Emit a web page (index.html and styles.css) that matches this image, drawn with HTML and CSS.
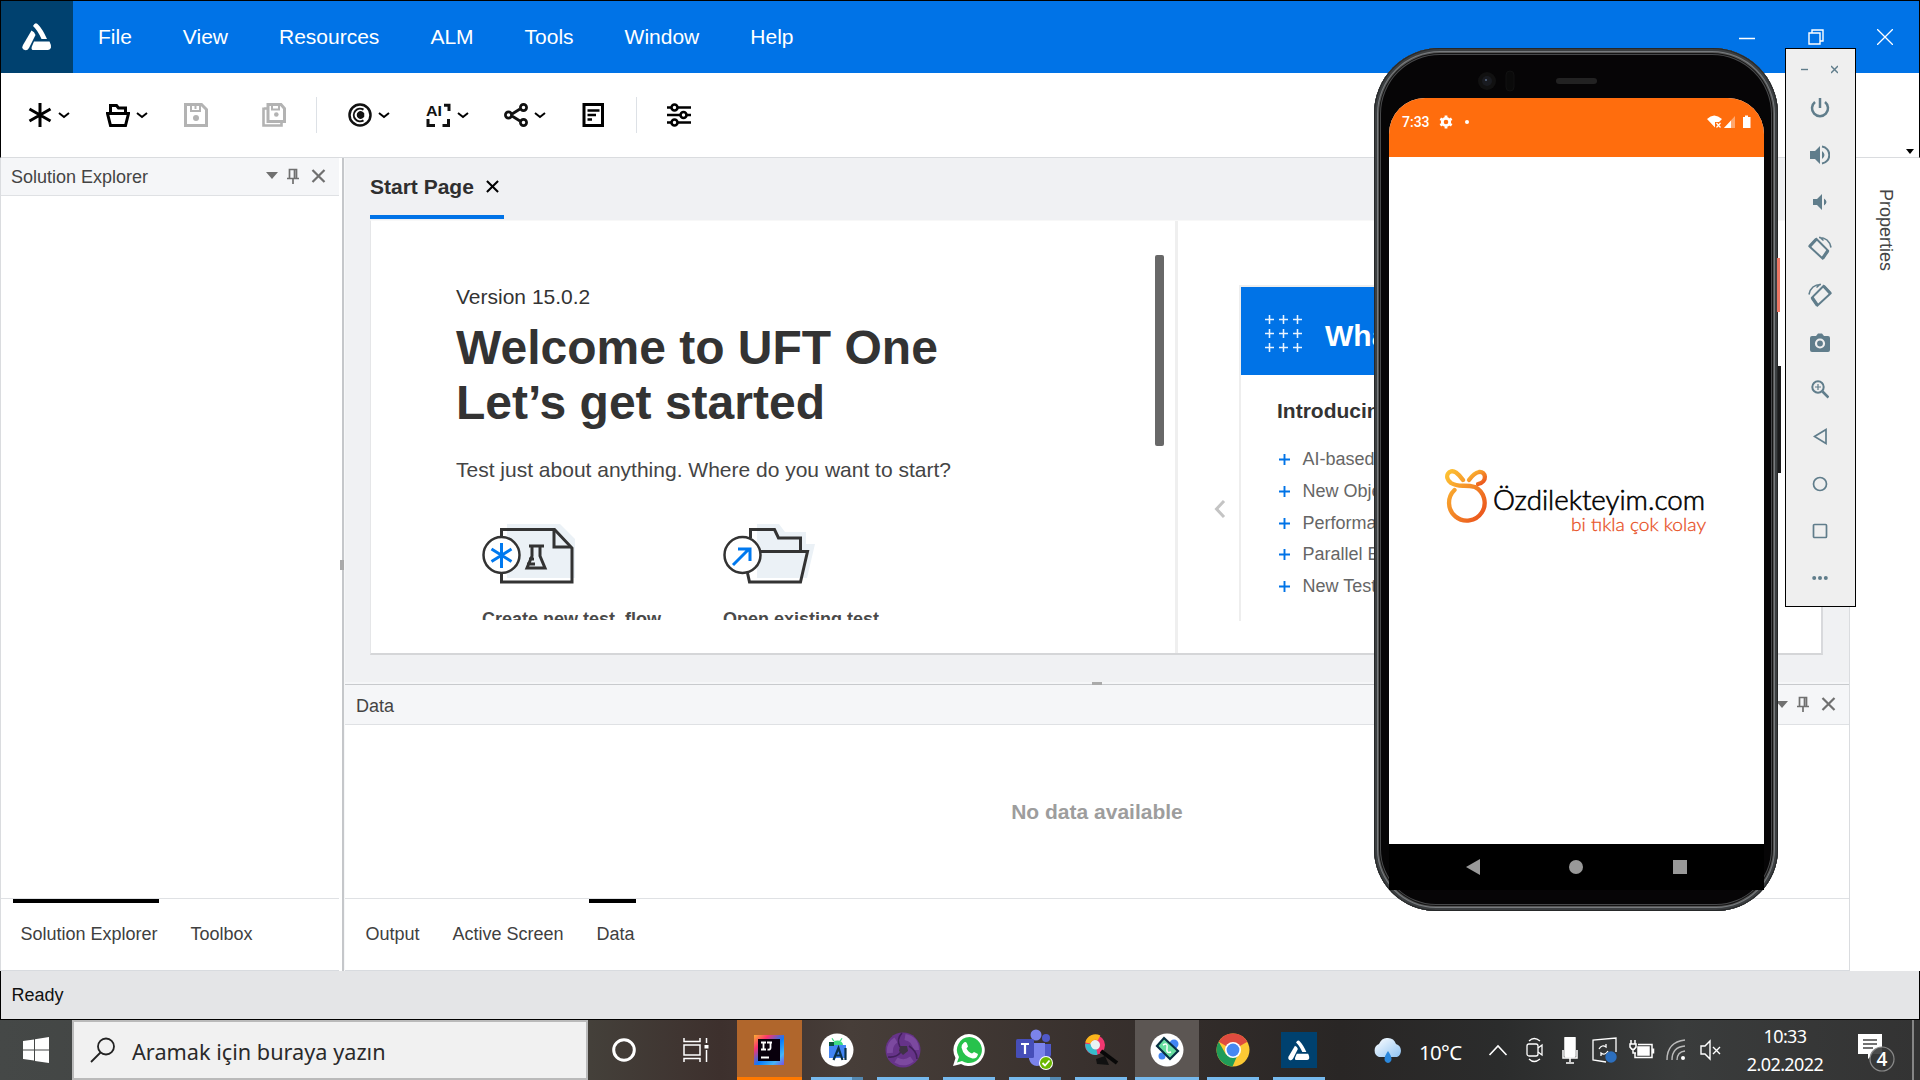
FILE: index.html
```html
<!DOCTYPE html>
<html lang="tr">
<head>
<meta charset="utf-8">
<title>UFT One</title>
<link rel="stylesheet" href="styles.css">
</head>
<body>
<svg class="defs" width="0" height="0" aria-hidden="true">
  <defs>
    <symbol id="uft" viewBox="0 0 30 28"><g fill="#fff"><path d="M11 3q2.500-5 5.500-1 4 4 8.500 14l-5.500 0q-4-9-8.500-13z"/><path d="M9.500 7.500q3 1 4 4.500L7 25q-2 3.500-5.500 1.500Q-.5 25 1 22z"/><path d="M12 18.500h15.500q2 4 1.500 6t-3 2.500H10.500q-2-1 0-5z"/></g></symbol>
    <symbol id="chev" viewBox="0 0 12 8"><path d="M1 2l5 4 5-4" fill="none" stroke="#000" stroke-width="2"/></symbol>
    <symbol id="pin" viewBox="0 0 12 16"><path d="M2.500 10V1.500h7V10M0 10.500h12M6 11v5M7.500 2v8" fill="none" stroke="#707070" stroke-width="1.700"/></symbol>
    <symbol id="close" viewBox="0 0 14 14"><path d="M1 1l12 12M13 1L1 13" fill="none" stroke="currentColor" stroke-width="2.200"/></symbol>
    <symbol id="plus" viewBox="0 0 11 11"><path d="M5.500 0v11M0 5.500h11" stroke="currentColor" stroke-width="1.900"/></symbol>
    <symbol id="rot" viewBox="0 0 24 24"><g fill="none" stroke="#607d8b"><path d="M8.500 2.500L20 14l-5.500 8L1.500 10z" stroke-width="2"/><path d="M8.500 2.500L1.500 10M20 14l-5.500 8" stroke-width="3.200"/><path d="M11 1q10 0 12 10M15.500 4l-4-3.500" stroke-width="1.600"/></g></symbol>
  </defs>
</svg>

<div class="app">
  <header class="titlebar">
    <div class="logo"><svg width="30" height="28"><use href="#uft"/></svg></div>
    <nav class="menu"><span>File</span><span>View</span><span>Resources</span><span>ALM</span><span>Tools</span><span>Window</span><span>Help</span></nav>
    <div class="winctl">
      <svg width="16" height="16"><path d="M0 9.500h16" stroke="#fff" stroke-width="1.500"/></svg>
      <svg width="16" height="16" fill="none" stroke="#fff" stroke-width="1.400"><path d="M1 4h11v11H1zM4 4V1h11v11h-3"/></svg>
      <svg width="16" height="16" stroke="#fff" stroke-width="1.300"><path d="M0 0l16 16M16 0L0 16"/></svg>
    </div>
  </header>

  <div class="toolbar">
    <div class="tool"><svg width="24" height="26" stroke="#000" stroke-width="3"><path d="M12 1v24M1.500 7l21 12M22.500 7l-21 12"/></svg><svg width="12" height="8"><use href="#chev"/></svg></div>
    <div class="tool"><svg width="24" height="24" fill="none" stroke="#000" stroke-width="3"><path d="M4.500 9V2.500h6l2 2.500h7v4M1.500 10.500h21l-3 12h-15z"/></svg><svg width="12" height="8"><use href="#chev"/></svg></div>
    <div class="tool"><svg width="24" height="24" fill="none" stroke="#b3b3b3" stroke-width="3"><path d="M1.500 1.500h16l5 5v16h-21z"/><path d="M7 2v6h9V2M11.500 3v3" stroke-width="2"/><circle cx="12" cy="15" r="3" fill="#b3b3b3" stroke="none"/></svg></div>
    <div class="tool"><svg width="24" height="24" fill="none" stroke="#b3b3b3" stroke-width="3"><path d="M6 1.500h13l3.500 4v13H6z"/><path d="M1.500 4.500v18h18v-4M2 5.500h3" stroke-width="2.600"/><path d="M10 2v4.500h7V2" stroke-width="2"/><circle cx="14.300" cy="11.500" r="2.300" fill="#b3b3b3" stroke="none"/></svg></div>
    <i class="sep"></i>
    <div class="tool"><svg width="24" height="24" fill="none" stroke="#111" stroke-width="2.500"><circle cx="12" cy="12" r="10.500"/><path d="M15.500 6.700A6.300 6.300 0 1 0 15.500 17.300" stroke-width="2"/><path d="M15.500 10.500a3.200 3.200 0 1 0 0 3z" fill="#111" stroke-width="1.500"/></svg><svg width="12" height="8"><use href="#chev"/></svg></div>
    <div class="tool"><svg width="25" height="24"><text x="0" y="13" class="ai" textLength="16" lengthAdjust="spacingAndGlyphs">AI</text><path d="M18 2.200h5V8M22.500 16v6.500h-6M9 22.500H2V16" fill="none" stroke="#111" stroke-width="3"/></svg><svg width="12" height="8"><use href="#chev"/></svg></div>
    <div class="tool"><svg width="24" height="24" fill="none" stroke="#111" stroke-width="2.700"><path d="M8 11l8-5M8 13l8 5"/><circle cx="4.500" cy="12" r="3.100"/><circle cx="19.500" cy="4.500" r="3.100"/><circle cx="19.500" cy="19.500" r="3.100"/></svg><svg width="12" height="8"><use href="#chev"/></svg></div>
    <div class="tool"><svg width="24" height="24" fill="none" stroke="#000" stroke-width="3"><path d="M2 1.500h18.500v21H2z"/><path d="M5.500 7.500h12M5.500 12H14M5.500 16.500H10" stroke-width="2.500"/></svg></div>
    <i class="sep sep-b"></i>
    <div class="tool"><svg width="24" height="24" fill="#fff" stroke="#000" stroke-width="2.600"><path d="M0 4.500h24M0 12h24M0 19.500h24"/><circle cx="7.500" cy="4.500" r="3"/><circle cx="16.500" cy="12" r="3"/><circle cx="7.500" cy="19.500" r="3"/></svg></div>
    <i class="overflow tri"></i>
  </div>

  <main class="work">
    <section class="explorer">
      <div class="phead"><span>Solution Explorer</span><i class="tri gray"></i><svg width="12" height="16"><use href="#pin"/></svg><svg class="x" width="15" height="14"><use href="#close"/></svg></div>
      <div class="pbody"></div>
      <div class="tabs"><span class="on">Solution Explorer</span><span>Toolbox</span></div>
    </section>
    <div class="vsplit"><i></i></div>
    <section class="center">
      <div class="doc">
        <div class="doctab"><span>Start Page</span><svg width="14" height="14"><use href="#close"/></svg></div>
        <div class="card">
          <div class="welcome">
            <div class="scroller">
              <p class="ver">Version 15.0.2</p>
              <h1>Welcome to UFT One<br>Let’s get started</h1>
              <p class="sub">Test just about anything. Where do you want to start?</p>
              <div class="starts">
                <div class="start"><svg width="94" height="60" fill="none" stroke="#333" stroke-width="3"><path d="M25 0h53l15 15v39H25z" fill="#ebf1f6" stroke="none"/><path d="M19.500 5.500h53L90 24v34H19.500z"/><path d="M72 6v17h17"/><circle cx="19.500" cy="31" r="18" fill="#fff" stroke-width="2.500"/><path d="M19.500 19v25M9.500 25l20 12.500M29.500 25l-20 12.500" stroke="#0079ef"/><path d="M47 22h15M50 23v9l-5 12h18l-5-12v-9M47 35h5M45 40h8"/></svg><b>Create new test, flow</b></div>
                <div class="start"><svg width="94" height="60" fill="none" stroke="#333" stroke-width="3"><path d="M34 0h22l6 8h21v12h9l-8 34H34z" fill="#ebf1f6" stroke="none"/><path d="M27.500 14V5.500h24l4 8.500h22v13M36 27.500h48.500l-7 30.500H26.500l-2-9"/><circle cx="19.500" cy="31" r="18" fill="#fff" stroke-width="2.500"/><path d="M10 41l16-16M15 25h12v12" stroke="#0079ef"/></svg><b>Open existing test</b></div>
              </div>
            </div>
            <i class="thumb"></i>
          </div>
          <div class="news">
            <svg class="prev" width="12" height="18" fill="none" stroke="#c4c4c4" stroke-width="3"><path d="M10 1L2.500 9l7.500 8"/></svg>
            <div class="newscard">
              <div class="newshead"><div class="grid"><svg><use href="#plus"/></svg><svg><use href="#plus"/></svg><svg><use href="#plus"/></svg><svg><use href="#plus"/></svg><svg><use href="#plus"/></svg><svg><use href="#plus"/></svg><svg><use href="#plus"/></svg><svg><use href="#plus"/></svg><svg><use href="#plus"/></svg></div>What’s New</div>
              <h2>Introducing</h2>
              <ul><li><svg><use href="#plus"/></svg>AI-based</li><li><svg><use href="#plus"/></svg>New Object</li><li><svg><use href="#plus"/></svg>Performance</li><li><svg><use href="#plus"/></svg>Parallel E</li><li><svg><use href="#plus"/></svg>New Test</li></ul>
            </div>
          </div>
        </div>
      </div>
      <div class="hsplit"><i></i></div>
      <div class="phead data"><span>Data</span><i class="tri gray"></i><svg width="12" height="16"><use href="#pin"/></svg><svg class="x" width="15" height="14"><use href="#close"/></svg></div>
      <div class="pbody nodata">No data available</div>
      <div class="tabs dtabs"><span>Output</span><span>Active Screen</span><span class="on">Data</span></div>
    </section>
    <aside class="props"><span>Properties</span></aside>
  </main>
  <footer class="status">Ready</footer>
</div>

<div class="taskbar">
  <div class="win"><svg width="26" height="26" fill="#fff"><path d="M0 4l11-1.500v10H0zM12 2.300L26 0v12.500H12zM0 13.500h11v10L0 22zM12 13.500h14V26l-14-2z"/></svg></div>
  <div class="search"><svg width="26" height="26" fill="none" stroke="#222" stroke-width="1.800"><circle cx="16" cy="9.500" r="8"/><path d="M10.500 15.500L1 25"/></svg><span>Aramak için buraya yazın</span></div>
  <div class="sys"><svg width="26" height="26"><circle cx="13" cy="13" r="10.300" fill="none" stroke="#fff" stroke-width="3"/></svg></div>
  <div class="sys"><svg width="26" height="26" fill="none" stroke="#fff" stroke-width="1.500"><path d="M1 1v3.500h16V1M1 8h16v10H1zM1 25v-3.500h16V25M23.500 1v5M23.500 13v12"/><path d="M21.500 8h4v3.500h-4z" fill="#fff" stroke="none"/></svg></div>
  <div class="apps">
    <div class="app-i ij"><svg width="32" height="32"><defs><linearGradient id="g1" x2="1" y2="1"><stop offset="0" stop-color="#fdb02f"/><stop offset=".25" stop-color="#fb3370"/><stop offset=".55" stop-color="#087cfa"/><stop offset=".8" stop-color="#46b5f5"/><stop offset="1" stop-color="#7b4ce0"/></linearGradient></defs><path d="M1 1h30v30H1z" fill="url(#g1)"/><path d="M5 5h22v22H5z" fill="#08000c"/><path d="M8 8.500h5M10.500 8.500v7M8 15.500h5M14 8.500h5M17.500 8v6q0 2-3 1.500M8 23.500h8" fill="none" stroke="#fff" stroke-width="1.800"/></svg></div>
    <div class="app-i twin"><svg width="34" height="34"><circle cx="17" cy="17" r="16.500" fill="#fff"/><path d="M12 12a5.500 4.500 0 0 1 11 0zM13 8l-1.500-2.500 1-.5 2 3zM21 8l1.500-2.500-1-.5-2 3z" fill="#3ddc84"/><path d="M9 12h17v13H9z" fill="#4285f4"/><path d="M9 9h5v4H9z" fill="#08563f"/><path d="M13.500 27l5-12 4 12M25.500 15v12M15 22.500h6" fill="none" stroke="#08304a" stroke-width="2.200"/></svg></div>
    <div class="app-i"><svg width="36" height="36" fill="none"><circle cx="18" cy="18" r="17.500" fill="#663389"/><path d="M20 5q11 2 11 13M27 27q-8 6-16 1M5 21q-1-9 6-13" stroke="#8a59ad" stroke-width="6" opacity=".6"/><path d="M17 1q-6 6-2 14M3 25q8 1 13-5M32 27q0-8-8-13" stroke="#42205b" stroke-width="1.600"/><path d="M15 14h7l1 5-5 4-4-4z" fill="#3e3244"/></svg></div>
    <div class="app-i"><svg width="34" height="34"><path d="M17 1A16 16 0 1 1 9 31L1 33l2.500-8A16 16 0 0 1 17 1z" fill="#fff"/><path d="M17.500 4A13 13 0 1 1 10 28l-5 1.500L7 24A13 13 0 0 1 17.500 4z" fill="#27c24c"/><path d="M11.500 10q2-2 3.500.5l1 3-1.500 2q2 4 5.500 5l2-1.500 4 2q-1 5-5.500 4.500-9-2-11-11-.2-3 2-4.500z" fill="#fff"/></svg></div>
    <div class="app-i twin"><svg width="38" height="42"><circle cx="20" cy="6" r="5.500" fill="#7b83eb"/><circle cx="30" cy="9" r="4" fill="#5059c9"/><path d="M24 15h11v11q-2 6-8 5z" fill="#5059c9"/><path d="M13 14h16v16q-2 7-8 7t-8-7z" fill="#7b83eb"/><rect x="0" y="10" width="18" height="19" rx="1.500" fill="#464eb8"/><path d="M5 15h8M9 15v10" stroke="#fff" stroke-width="2.200"/><circle cx="30" cy="34" r="7" fill="#fff"/><circle cx="30" cy="34" r="6" fill="#6bb700"/><path d="M26.500 34l2.500 2.500 4.500-5" fill="none" stroke="#fff" stroke-width="1.800"/></svg></div>
    <div class="app-i"><svg width="36" height="34" fill="none"><path d="M13 26l9-3 4 9-12-1z" fill="#111"/><circle cx="12" cy="12" r="7.500" fill="#e8f2f5" stroke="#f23770" stroke-width="5"/><path d="M5 10a7.500 7.500 0 0 1 11-5" stroke="#fbb51b" stroke-width="5.500"/><path d="M5 11a7.500 7.500 0 0 0 9 8" stroke="#35bccb" stroke-width="5.500"/><path d="M18 18l16 12" stroke="#080808" stroke-width="4"/></svg></div>
    <div class="app-i active"><svg width="34" height="34"><circle cx="17" cy="17" r="16.500" fill="#fff"/><circle cx="24" cy="11" r="4.500" fill="#4285f4"/><circle cx="12" cy="23" r="3.500" fill="#4285f4"/><path d="M14 5l14 13-8 8L7 13z" fill="#68dfa0" stroke="#073042" stroke-width="2.200"/><path d="M13 12q5-3 4 3t4 4" fill="none" stroke="#fff" stroke-width="1.500"/></svg></div>
    <div class="app-i"><svg width="34" height="34"><circle cx="17" cy="17" r="16.500" fill="#fcc934"/><path d="M17 17L2.700 8.800a16.500 16.500 0 0 1 28.600 0z" fill="#df4b3f"/><path d="M2.700 8.800l7.300 12.700 7 1.500 5-2-5.500 12.500A16.500 16.500 0 0 1 2.700 8.800z" fill="#209c58"/><circle cx="17" cy="17" r="8" fill="#fff"/><circle cx="17" cy="17" r="6.400" fill="#4688f1"/></svg></div>
    <div class="app-i"><div class="uftbox"><svg width="22" height="21"><use href="#uft"/></svg></div></div>
  </div>
  <div class="tray">
    <div class="weather"><svg width="32" height="28"><defs><linearGradient id="g2" x2="1" y2="1"><stop offset="0" stop-color="#fff"/><stop offset="1" stop-color="#8fc3f3"/></linearGradient></defs><path d="M7 21a7 7 0 0 1 0-13Q10 1 16 2q6 0 8 6a7 7 0 0 1 1 13z" fill="url(#g2)"/><path d="M16 15q7 10 0 12-7-2 0-12z" fill="#2b88dd"/></svg><span>10°C</span></div>
    <svg width="20" height="12" fill="none" stroke="#fff" stroke-width="1.600"><path d="M1.500 11L10 2l8.500 9"/></svg>
    <svg width="18" height="26" fill="none" stroke="#fff" stroke-width="1.300"><rect x="1" y="7" width="11" height="12" rx="2"/><path d="M12 11l4-3v10l-4-3M3 4q5-5 11 0M3 22q5 5 11 0"/></svg>
    <svg width="16" height="27" fill="none" stroke="#fff" stroke-width="1.500"><rect x="3" y="0" width="10" height="20" rx="1" fill="#fff"/><path d="M1 13v8h14v-8M8 21v4M4 26h8"/></svg>
    <svg width="26" height="26" fill="none" stroke="#fff" stroke-width="1.300"><path d="M14 25L1 23V3l23-2v14"/><path d="M7 12q3-5 7-2V7M16 14q-3 5-7 2v3"/><circle cx="19" cy="20" r="5.700" fill="#2c6fbe" stroke="none"/></svg>
    <svg width="26" height="22" fill="none" stroke="#fff" stroke-width="1.500"><path d="M9 5.500h14v13H6v-5M24.500 9.500v5M2 1v4M6 1v4M1 5h6v3q-3 5-6 0zM4 10v4h3"/><path d="M9 8h11v8H9z" fill="#fff"/></svg>
    <svg width="20" height="22" fill="none" stroke="#bbb" stroke-width="1.400"><path d="M1 21Q1 3 19 1M6 21q0-13 13-14M11 21q0-8 8-9"/><circle cx="17" cy="19" r="2" fill="#fff" stroke="none"/></svg>
    <svg width="22" height="22" fill="none" stroke="#fff" stroke-width="1.400"><path d="M1 7h4l5-5v18l-5-5H1zM13 8l7 7M20 8l-7 7"/></svg>
    <div class="clock"><span>10:33</span><span>2.02.2022</span></div>
    <div class="notif"><svg width="40" height="42"><path d="M1 1h24v20h-9l-5 5v-5H1z" fill="#fff"/><path d="M6 7h14M6 11h14M6 15h10" stroke="#444" stroke-width="1.400"/><circle cx="25" cy="26" r="12" fill="#373939" fill-opacity=".9" stroke="#8a8a8a" stroke-width="1.200"/><text x="25" y="32.500" text-anchor="middle" class="cnt">4</text></svg></div>
    <i class="peek"></i>
  </div>
</div>

<div class="phone">
  <i class="hw pw"></i><i class="hw vol"></i>
  <div class="bezel"><svg width="130" height="26"><circle cx="12" cy="13" r="9" fill="#111"/><circle cx="12" cy="13" r="5" fill="#191b20"/><circle cx="11" cy="12" r="1" fill="#5a6b86"/><rect x="31" y="3" width="8" height="20" rx="4" fill="#0a0a0a" stroke="#111"/><rect x="81" y="10" width="41" height="6" rx="3" fill="#222"/></svg></div>
  <div class="screen">
    <div class="astatus"><span>7:33</span>
      <svg width="14" height="14" fill="none" stroke="#fff"><circle cx="7" cy="7" r="3.700" stroke-width="2.800"/><path d="M7 .5v2M7 11.500v2M1.300 3.700l2 1.200M10.700 9.100l2 1.200M1.300 10.300l2-1.200M10.700 4.900l2-1.200" stroke-width="2.800"/></svg>
      <i class="dot"></i>
      <svg class="sig" width="44" height="14" fill="#fff"><path d="M0 4q7-7 15 0l-3 3H8v5.500z"/><path d="M9.500 8l4 4.500M13.500 8l-4 4.500" stroke="#fff" stroke-width="1.200"/><path d="M17 13L28 1v12z" opacity=".4"/><path d="M17 13l7-7.600V13z"/><path d="M36 2h2V.500h3V2h2.500v11H36z"/></svg>
    </div>
    <div class="splash">
      <svg width="270" height="72"><defs><linearGradient id="g3" x2="1" y2="1"><stop offset="0" stop-color="#fdc233"/><stop offset="1" stop-color="#ea4e1b"/></linearGradient></defs>
        <g fill="none" stroke="url(#g3)" stroke-width="4.300" stroke-linecap="round"><path d="M10.500 21A17.800 17.800 0 1 0 31 18C20 15 15 19 7 14-1 8 5-1 12 3.500q4 3 7 7.500"/><path d="M25 11q5-7 10-8c7-1 9 10-1 12"/></g>
        <text x="49" y="40.500" class="oz" textLength="212" lengthAdjust="spacingAndGlyphs">Özdilekteyim.com</text>
        <text x="127" y="61.500" class="tag" textLength="135" lengthAdjust="spacingAndGlyphs">bi tıkla çok kolay</text></svg>
    </div>
    <div class="anav"><svg width="14" height="16" fill="#999"><path d="M0 8L14 0v16z"/></svg><svg width="14" height="16"><circle cx="7" cy="8" r="7" fill="#999"/></svg><svg width="14" height="16"><path d="M0 1h14v14H0z" fill="#999"/></svg></div>
  </div>
</div>

<div class="emu">
  <div class="emuwin"><svg width="7" height="9"><path d="M0 4.500h7" stroke="#607d8b" stroke-width="1.400"/></svg><svg width="7" height="9" stroke="#607d8b" stroke-width="1.500"><path d="M0 1l7 7M7 1L0 8"/></svg></div>
  <div><svg width="20" height="22" fill="none" stroke="#607d8b" stroke-width="2.500"><path d="M10 1v10M5 5a8 8 0 1 0 10 0"/></svg></div>
  <div><svg width="20" height="20" fill="#607d8b"><path d="M0 6h5l5-5v18l-5-5H0zM12 6q5 4 0 8z"/><path d="M12 1.500a8.600 8.600 0 0 1 0 17" fill="none" stroke="#607d8b" stroke-width="2"/></svg></div>
  <div><svg width="16" height="18" fill="#607d8b"><path d="M1 6h4l5-5v16l-5-5H1zM12 5.500q5 3.500 0 7z"/></svg></div>
  <div><svg width="24" height="25"><use href="#rot"/></svg></div>
  <div><svg class="flip" width="24" height="25"><use href="#rot"/></svg></div>
  <div><svg width="20" height="20"><path d="M2 3h4l2-2.500h4L14 3h4q2 0 2 2v12q0 2-2 2H2q-2 0-2-2V5q0-2 2-2z" fill="#607d8b"/><circle cx="10" cy="10.500" r="4" fill="none" stroke="#efefef" stroke-width="2.200"/></svg></div>
  <div><svg width="18" height="19" fill="none" stroke="#607d8b" stroke-width="2"><circle cx="7" cy="7" r="5.700"/><path d="M11.500 11.500l6 6" stroke-width="2.600"/><path d="M7 4v6M4 7h6" stroke-width="1.200"/></svg></div>
  <div><svg width="14" height="17" fill="none" stroke="#607d8b" stroke-width="1.700"><path d="M1.500 8.500L13 1.500v14z"/></svg></div>
  <div><svg width="16" height="16" fill="none" stroke="#607d8b" stroke-width="1.700"><circle cx="8" cy="8" r="6.500"/></svg></div>
  <div><svg width="16" height="16" fill="none" stroke="#607d8b" stroke-width="1.700"><rect x="1.500" y="1.500" width="13" height="13" rx="1"/></svg></div>
  <div><svg width="16" height="6" fill="#607d8b"><circle cx="2.200" cy="3" r="2"/><circle cx="8" cy="3" r="2"/><circle cx="13.800" cy="3" r="2"/></svg></div>
</div>
</body>
</html>
```
FILE: styles.css
```css
* { box-sizing: border-box; }
body { margin: 0; width: 1920px; height: 1080px; overflow: hidden; position: relative; background: #fff; font: 18px "Liberation Sans", Arial, sans-serif; color: #444; }
svg { display: block; flex: none; }
.defs { position: absolute; }
h1, h2, p, ul { margin: 0; padding: 0; }
.app { height: 1020px; display: flex; flex-direction: column; }

.titlebar { height: 73px; border: 1px solid #000; border-bottom: 0; background: #0073e7; display: flex; align-items: center; }
.logo { width: 72px; height: 72px; background: #00416f; display: flex; align-items: center; justify-content: center; }
.menu { display: flex; gap: 51px; margin-left: 25px; color: #fff; font-size: 21px; }
.winctl { margin-left: auto; display: flex; gap: 53px; margin-right: 26px; }

.toolbar { height: 85px; border: 1px solid #000; border-top: 0; border-bottom: 1px solid #dadcdf; display: flex; align-items: center; padding-left: 27px; position: relative; }
.tool { width: 78px; height: 24px; display: flex; align-items: center; gap: 6px; }
.ai { font: bold 15.500px "Liberation Sans", Arial, sans-serif; fill: #111; }
.sep { width: 1px; height: 36px; background: #dde1e6; margin: 0 31px 0 -24px; }
.sep-b { margin: 0 30px 0 -24px; }
.tri { width: 0; height: 0; border: 4px solid transparent; border-top: 5px solid #000; border-bottom: 0; }
.overflow { position: absolute; right: 5px; bottom: 3px; }
.tri.gray { border-width: 7px 6.500px 0; border-top-color: #707070; }

.work { height: 813px; display: flex; }
.explorer { width: 339px; border-left: 1px solid #dadcdf; display: flex; flex-direction: column; }
.phead { height: 38px; background: #f5f6f8; border-bottom: 1px solid #dfe1e4; display: flex; align-items: center; padding: 0 13px 2px 10px; }
.phead span { flex: 1; padding-top: 3px; }
.phead svg { margin-left: 9px; color: #707070; }
.phead .x { margin-left: 12px; }
.pbody { flex: 1; }
.tabs { height: 73px; border-top: 1px solid #dfe1e4; border-bottom: 1px solid #d8dbdf; display: flex; padding-left: 12px; color: #404040; }
.tabs span { border-top: 4px solid transparent; padding: 21px 1px 0 7.500px; margin-right: 24.500px; }
.tabs .on { border-color: #000; }
.vsplit { width: 6px; background: linear-gradient(90deg, #fff 3px, #c5c7ca 3px, #c5c7ca 5px, #f6f7f8 5px); display: flex; align-items: center; }
.vsplit i { width: 4px; height: 10px; background: #aaa; margin-left: 1px; }
.center { width: 1504px; display: flex; flex-direction: column; }
.doc { height: 524px; background: #f0f1f3; padding-left: 25px; }
.doctab { width: 134px; height: 61px; border-bottom: 4px solid #0073e7; font-weight: bold; font-size: 21px; color: #2f2f2f; display: flex; align-items: center; gap: 12px; white-space: nowrap; }
.doctab svg { color: #000; width: 13px; height: 13px; }
.card { width: 1453px; height: 435px; margin-top: 1px; background: #fff; border: 1px solid #e5e6e8; border-top-color: #f8f8f8; border-right: 2px solid #d8d9dc; border-bottom: 2px solid #d5d6d8; display: flex; overflow: hidden; }
.welcome { width: 807px; border-right: 3px solid #efefef; display: flex; }
.scroller { height: 399px; width: 784px; padding: 63px 0 0 85px; overflow: hidden; }
.thumb { width: 9px; height: 191px; border-radius: 2px; margin-top: 34px; background: #686868; }
.ver { font-size: 21px; line-height: 26px; color: #333; }
h1 { font-size: 48px; line-height: 55px; color: #333; margin-top: 10px; }
.sub { font-size: 21px; line-height: 26px; margin-top: 27px; }
.starts { display: flex; gap: 61px; margin: 41px 0 0 26px; }
.start { width: 180px; white-space: nowrap; line-height: 24px; }
.start b { display: block; margin-top: 23px; color: #4a4a4a; }
.news { display: flex; }
.prev { margin: 279px 0 0 36px; }
.newscard { margin: 64px 0 0 13px; width: 400px; height: 336px; border: solid #eee; border-width: 2px 0 0 2px; }
.newshead { height: 88px; background: #0073e7; color: #fff; font: bold 30px "Liberation Sans", Arial, sans-serif; display: flex; align-items: center; padding: 9px 0 0 24px; gap: 23px; }
.grid { display: grid; grid-template-columns: repeat(3, 9px); gap: 5px; color: #e9f4ff; margin-top: -4px; }
.grid svg { width: 9px; height: 9px; }
h2 { font-size: 21px; line-height: 26px; margin: 23px 0 0 36px; color: #333; }
ul { list-style: none; margin: 20px 0 0 38px; color: #666; }
li { height: 31.700px; display: flex; align-items: center; gap: 12.500px; }
li svg { width: 11px; height: 11px; color: #0073e7; }
.hsplit { height: 3px; background: #f5f6f8; border-bottom: 1px solid #c8cacd; display: flex; justify-content: center; }
.hsplit i { width: 10px; height: 3px; background: #aaa; }
.data { height: 40px; padding: 0 13px 1px 11px; }
.data span { padding-top: 4px; }
.nodata { color: #9d9d9d; font-weight: bold; font-size: 21px; display: flex; align-items: center; justify-content: center; }
.dtabs { padding-left: 13px; }
.props { flex: 1; border-left: 1px solid #dadcdf; display: flex; justify-content: center; padding-top: 31px; }
.props span { writing-mode: vertical-rl; height: 84px; margin-left: 1px; }
.status { height: 49px; background: #e4e5e7; border: 1px solid #000; border-top: 0; color: #111; display: flex; align-items: center; padding-left: 10.500px; }

.taskbar { height: 60px; display: flex; background: linear-gradient(90deg, #454847 0, #404341 300px, #44403a 590px, #3d302d 720px, #473e39 850px, #38302d 1100px, #292625 1340px, #2b2c2c 1500px, #3a3c3c 1680px, #333 1920px); color: #fff; font-family: "Open Sans", "Noto Sans", sans-serif; }
.win { width: 72px; display: flex; align-items: center; padding-left: 23px; }
.search { width: 516px; background: #f1f1f1; border: 2px solid #bababa; display: flex; align-items: center; padding-left: 16px; gap: 16px; font-family: "Noto Sans", sans-serif; font-size: 21.700px; color: #2a2a2a; }
.search span { margin-top: 2px; white-space: nowrap; }
.sys { width: 72px; display: flex; align-items: center; justify-content: center; }
.apps { display: flex; margin-left: 5px; gap: 14px; }
.app-i { width: 52px; display: flex; align-items: center; justify-content: center; border-bottom: 3px solid #76b9ed; padding-top: 3px; }
.ij { width: 65px; background: #b0662c; border-color: #ff7900; margin-right: -5px; padding-right: 2px; }
.twin { border-image: linear-gradient(90deg, #76b9ed 39px, #5488b0 39px) 3; border-style: solid; border-width: 0 0 3px; }
.active { width: 64px; margin: 0 -6px; background: #5c5653; }
.uftbox { width: 36px; height: 36px; background: #00416f; display: flex; align-items: center; justify-content: center; }
.tray { display: flex; flex: 1; align-items: center; padding-left: 47px; }
.weather { display: flex; align-items: center; gap: 15px; font-size: 20.500px; letter-spacing: -.7px; width: 116px; font-family: "Noto Sans", sans-serif; }
.weather span { margin-top: 3px; }
.tray > svg { margin-right: 18px; }
.tray > svg:nth-of-type(n+3) { margin-right: 14px; }
.tray > svg:nth-of-type(n+4) { margin-right: 11px; }
.tray > svg:nth-of-type(n+6) { margin-right: 14px; }
.clock { width: 98px; display: flex; flex-direction: column; align-items: center; font-size: 18px; line-height: 28px; letter-spacing: -.6px; font-family: "Noto Sans", sans-serif; }
.notif { margin: 7px 0 0 23px; }
.cnt { fill: #fff; font: 600 19px "Open Sans", sans-serif; }
.peek { margin-left: auto; margin-right: 6px; width: 2px; height: 60px; background: #858585; }

.phone { position: absolute; left: 1374px; top: 48px; width: 404px; height: 863px; border-radius: 66px 66px 62px 62px; background: #060506; padding: 0 14px 21px 15px; box-shadow: inset 0 0 0 1px #262829, inset 0 0 0 3px #3c3f41, inset 0 0 0 4px #777b7e, inset 0 0 0 5px #555, inset 0 0 0 6px #141414, inset 0 0 0 7px #48494b; display: flex; flex-direction: column; }
.hw { position: absolute; right: -2px; width: 3px; }
.pw { top: 210px; height: 54px; background: #ec7663; }
.vol { top: 318px; height: 107px; right: -3px; background: #1b1b1c; }
.bezel { height: 50px; padding: 20px 0 0 86px; }
.screen { flex: 1; display: flex; flex-direction: column; border-radius: 36px 36px 0 0; overflow: hidden; background: linear-gradient(#fff 746px, #000 746px); }
.astatus { height: 59px; background: #ff6d0d; color: #fff; font: 500 14px Roboto, sans-serif; display: flex; align-items: center; padding: 0 13px 12px; }
.astatus svg { margin-left: 9px; }
.dot { width: 4px; height: 4px; border-radius: 2px; background: #fff; margin-left: 12px; }
.astatus .sig { margin-left: auto; }
.splash { flex: 1; padding: 312px 0 0 55px; }
.oz { font: 300 27px Lato, sans-serif; fill: #000; stroke: #000; stroke-width: .6px; }
.tag { font: 300 17.500px Lato, sans-serif; fill: #e8501f; stroke: #e8501f; stroke-width: .3px; }
.anav { height: 46px; background: #000; border-radius: 0 0 36px 36px; display: flex; justify-content: center; align-items: center; gap: 89.500px; padding-right: 1px; }

.emu { position: absolute; left: 1785px; top: 48px; width: 71px; height: 559px; border: 1px solid #000; background: #efefef; display: grid; grid-template-rows: 35px repeat(11, 47px); justify-items: center; padding-right: 2px; }
.emu > div { display: flex; align-items: center; }
.emu > .emuwin { gap: 23px; padding-top: 5px; }
.flip { transform: scaleX(-1); }
```
